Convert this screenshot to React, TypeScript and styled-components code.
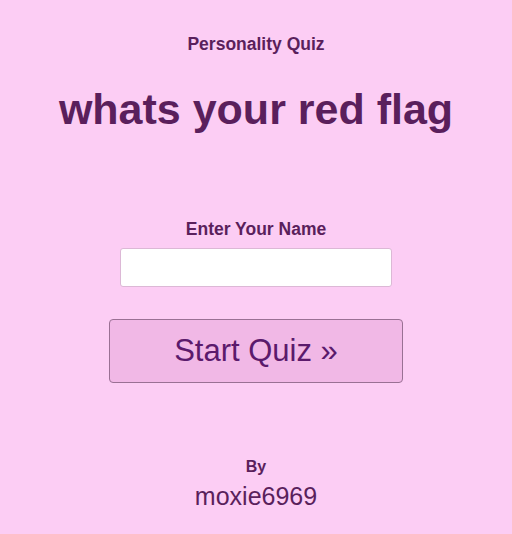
import styled, { createGlobalStyle } from 'styled-components';

const GlobalStyle = createGlobalStyle`
  html, body {
    margin: 0;
    padding: 0;
    background: #fccdf4;
  }
  body {
    font-family: "Liberation Sans", Arial, sans-serif;
  }
`;

const Page = styled.main`
  width: 512px;
  height: 534px;
  display: flex;
  flex-direction: column;
  align-items: center;
  background: #fccdf4;
  color: #5a1f5c;
`;

const Kicker = styled.h3`
  margin: 34px 0 0;
  font-size: 17.5px;
  line-height: 20px;
  font-weight: 700;
`;

const Title = styled.h1`
  margin: 30px 0 0;
  font-size: 43px;
  line-height: 50px;
  font-weight: 700;
`;

const Form = styled.form`
  margin-top: 85px;
  display: flex;
  flex-direction: column;
  align-items: center;
`;

const Label = styled.label`
  font-size: 17.5px;
  line-height: 20px;
  font-weight: 700;
`;

const NameInput = styled.input`
  margin-top: 9px;
  box-sizing: border-box;
  width: 272px;
  height: 39px;
  border: 1px solid #dcb8d6;
  border-radius: 3px;
  background: #fff;
  font-family: inherit;
  font-size: 16px;
  padding: 0 8px;
  outline: none;
`;

const StartButton = styled.button`
  margin-top: 32px;
  box-sizing: border-box;
  width: 294px;
  height: 64px;
  border: 1px solid #9a7094;
  border-radius: 4px;
  background: #f1b8e6;
  color: #5b1a6c;
  font-family: "Liberation Sans", Arial, sans-serif;
  font-size: 31px;
  cursor: pointer;
`;

const Credit = styled.footer`
  margin-top: 74px;
  display: flex;
  flex-direction: column;
  align-items: center;
`;

const By = styled.div`
  font-size: 16px;
  line-height: 20px;
  font-weight: 700;
`;

const Author = styled.div`
  margin-top: 4px;
  font-size: 25px;
  line-height: 30px;
`;

export default function App() {
  return (
    <>
      <GlobalStyle />
      <Page>
        <Kicker>Personality Quiz</Kicker>
        <Title>whats your red flag</Title>
        <Form onSubmit={(e) => e.preventDefault()}>
          <Label htmlFor="name">Enter Your Name</Label>
          <NameInput id="name" type="text" />
          <StartButton type="submit">Start Quiz »</StartButton>
        </Form>
        <Credit>
          <By>By</By>
          <Author>moxie6969</Author>
        </Credit>
      </Page>
    </>
  );
}
